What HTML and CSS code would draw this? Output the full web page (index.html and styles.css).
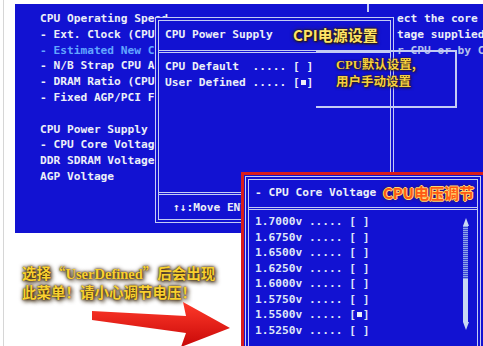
FILE: index.html
```html
<!DOCTYPE html>
<html>
  <head>
    <title>BIOS CPU Core Voltage</title>
    <link rel="stylesheet" href="styles.css">
  </head>
  <body>
    <div class="page">
      <div class="bios">
        <div class="menu">
          <div class="row">CPU Operating Speed</div>
          <div class="row">- Ext. Clock (CPU/PCI)</div>
          <div class="row dim">- Estimated New CPU Clock</div>
          <div class="row">- N/B Strap CPU As</div>
          <div class="row">- DRAM Ratio (CPU:DRAM)</div>
          <div class="row">- Fixed AGP/PCI Frequency</div>
          <div class="row"> </div>
          <div class="row">CPU Power Supply</div>
          <div class="row">- CPU Core Voltage</div>
          <div class="row">DDR SDRAM Voltage</div>
          <div class="row">AGP Voltage</div>
        </div>
        <div class="help">
          <div class="row">Select the core</div>
          <div class="row">Voltage supplied</div>
          <div class="row faint"> for CPU or by CPU</div>
        </div>
      </div>
    </div>

    <div class="tick"></div>

    <!-- CPU Power Supply popup -->
    <div class="popup">
      <div class="popup-head row">CPU Power Supply</div>
      <div class="popup-body">
        <div class="row">CPU Default  ..... [ ]</div>
        <div class="row">User Defined ..... [<span class="sel"></span>]</div>
      </div>
      <div class="popup-foot row">↑↓:Move ENTER:Accept</div>
    </div>
    <div class="note-box"></div>
    <div class="tag tag-cpi">CPI电源设置</div>
    <div class="tag tag-note"><span class="latin">CPU</span>默认设置,<br>用户手动设置</div>

    <!-- annotation + arrow -->
    <div class="hint">选择“<span class="latin">UserDefined</span>”后会出现<br>此菜单！请小心调节电压！</div>
    <svg class="arrow" width="146" height="50" viewBox="0 0 146 50">
      <defs>
        <linearGradient id="red" x1="0" y1="0" x2="0" y2="1">
          <stop offset="0" stop-color="#ff3a2a"/>
          <stop offset="1" stop-color="#c80808"/>
        </linearGradient>
      </defs>
      <polygon points="4,13 98,18 95,4 142,30 93,49 98,35 4,22" fill="url(#red)"/>
    </svg>

    <!-- CPU Core Voltage panel -->
    <div class="vpanel">
      <div class="vbox">
        <div class="vhead row">- CPU Core Voltage</div>
        <div class="vbody">
          <div class="vlist">
            <div class="row">1.7000v ..... [ ]</div>
            <div class="row">1.6750v ..... [ ]</div>
            <div class="row">1.6500v ..... [ ]</div>
            <div class="row">1.6250v ..... [ ]</div>
            <div class="row">1.6000v ..... [ ]</div>
            <div class="row">1.5750v ..... [ ]</div>
            <div class="row">1.5500v ..... [<span class="sel"></span>]</div>
            <div class="row">1.5250v ..... [ ]</div>
          </div>
          <div class="scroll">
            <div class="up"></div>
            <div class="track"></div>
            <div class="thumb"></div>
            <div class="down"></div>
          </div>
        </div>
      </div>
    </div>
    <div class="tag tag-volt">CPU电压调节</div>
  </body>
</html>
```

FILE: styles.css
```css
* {
  box-sizing: border-box;
}

body {
  margin: 0;
  width: 483px;
  height: 346px;
  overflow: hidden;
  position: relative;
  background-color: #ffffff;
  font-family: "DejaVu Sans Mono", "Liberation Mono", monospace;
  font-weight: bold;
  font-size: 11.2px;
  color: #eceff8;
}

.row {
  white-space: pre;
}

.page {
  height: 346px;
  margin-left: 3px;
  border-left: 1px solid #d6d6d6;
  padding: 4px 0 0 11px;
}

.bios {
  display: flex;
  height: 229px;
  background-color: #1212d2;
  padding: 7px 0 0 25px;
  line-height: 15.8px;
  overflow: hidden;
}

.menu {
  flex: 0 0 357px;
  overflow: hidden;
}

.dim {
  color: #62a6ff;
}

.help {
  flex: 1;
  overflow: hidden;
}

.help .row {
  margin-left: -3ch;
}

.faint {
  color: #b4c0ec;
}

.tick {
  position: absolute;
  left: 367px;
  top: 4px;
  width: 2px;
  height: 8px;
  background-color: #c4ccf4;
}

/* popup */
.popup {
  position: absolute;
  left: 155px;
  top: 17px;
  width: 239px;
  height: 206px;
  background-color: #1212d2;
  border: 4px double #c4ccf4;
  display: flex;
  flex-direction: column;
  line-height: 16px;
  overflow: hidden;
}

.popup-head {
  height: 32px;
  padding: 6px 0 0 6px;
  border-bottom: 3px double #c4ccf4;
}

.popup-body {
  flex: 1;
  padding: 6px 0 0 6px;
}

.popup-foot {
  height: 27px;
  padding: 5px 0 0 14px;
  border-top: 3px double #c4ccf4;
}

.sel {
  display: inline-block;
  width: 1ch;
  height: 8px;
  position: relative;
}

.sel::after {
  content: "";
  position: absolute;
  left: 1px;
  top: 2px;
  width: 5px;
  height: 5px;
  background-color: #eceff8;
}

.note-box {
  position: absolute;
  left: 316px;
  top: 50px;
  width: 141px;
  height: 58px;
  border: 2px solid #c4ccf4;
  border-left: none;
}

/* yellow labels */
.tag {
  position: absolute;
  font-family: "Noto Sans CJK SC", sans-serif;
  font-weight: bold;
  white-space: nowrap;
}

.tag-cpi {
  left: 293px;
  top: 26px;
  font-size: 15px;
  line-height: 18px;
  color: #ffe468;
  text-shadow: 0 0 2px #2a1800, 1px 1px 2px #2a1800, 0 0 4px #3a2a00;
}

.tag-note {
  left: 336px;
  top: 56px;
  font-size: 12.5px;
  line-height: 16px;
  color: #f6d040;
  text-shadow: 0 0 2px #2a1800, 1px 1px 3px #2a1800;
}

.latin {
  font-family: "Liberation Serif", serif;
}

.tag-volt {
  left: 383px;
  top: 184px;
  font-size: 15px;
  line-height: 18px;
  color: #ff5a14;
  text-shadow: -1px 0 #ffd870, 1px 0 #ffd870, 0 -1px #ffd870, 0 1px #ffd870, 0 0 4px #5a1000;
}

.hint {
  position: absolute;
  left: 22px;
  top: 264px;
  font-family: "Noto Sans CJK SC", sans-serif;
  font-size: 14.5px;
  line-height: 18px;
  font-weight: bold;
  color: #f8d030;
  white-space: nowrap;
  text-shadow: 0 0 2px #3a2000, 0 0 4px #3a2000, 2px 2px 4px #3a2a10;
}

.arrow {
  position: absolute;
  left: 88px;
  top: 298px;
}

/* voltage panel */
.vpanel {
  position: absolute;
  left: 241px;
  top: 172px;
  width: 250px;
  height: 180px;
  background-color: #1212d2;
  border: 3px solid #d81c1c;
  padding: 1px 0 0 1px;
}

.vbox {
  width: 236px;
  height: 100%;
  border: 4px double #c4ccf4;
  border-bottom: none;
  display: flex;
  flex-direction: column;
}

.vhead {
  height: 30px;
  padding: 5px 0 0 6px;
  line-height: 16px;
  border-bottom: 3px double #c4ccf4;
}

.vbody {
  flex: 1;
  display: flex;
}

.vlist {
  flex: 1;
  padding: 4px 0 0 6px;
  line-height: 15.5px;
  color: #dfe6f8;
}

.scroll {
  width: 7px;
  margin-right: 8px;
  padding-top: 8px;
  display: flex;
  flex-direction: column;
  align-items: center;
}

.up {
  width: 0;
  height: 0;
  border-left: 3.5px solid transparent;
  border-right: 3.5px solid transparent;
  border-bottom: 8px solid #c8d8f4;
}

.down {
  width: 0;
  height: 0;
  border-left: 3.5px solid transparent;
  border-right: 3.5px solid transparent;
  border-top: 8px solid #c8d8f4;
}

.track {
  width: 5px;
  height: 53px;
  background-image: repeating-linear-gradient(#8ea4e8 0 1px, #3a48d8 1px 2px);
}

.thumb {
  width: 5px;
  height: 43px;
  background-color: #c8d8f4;
}
```
